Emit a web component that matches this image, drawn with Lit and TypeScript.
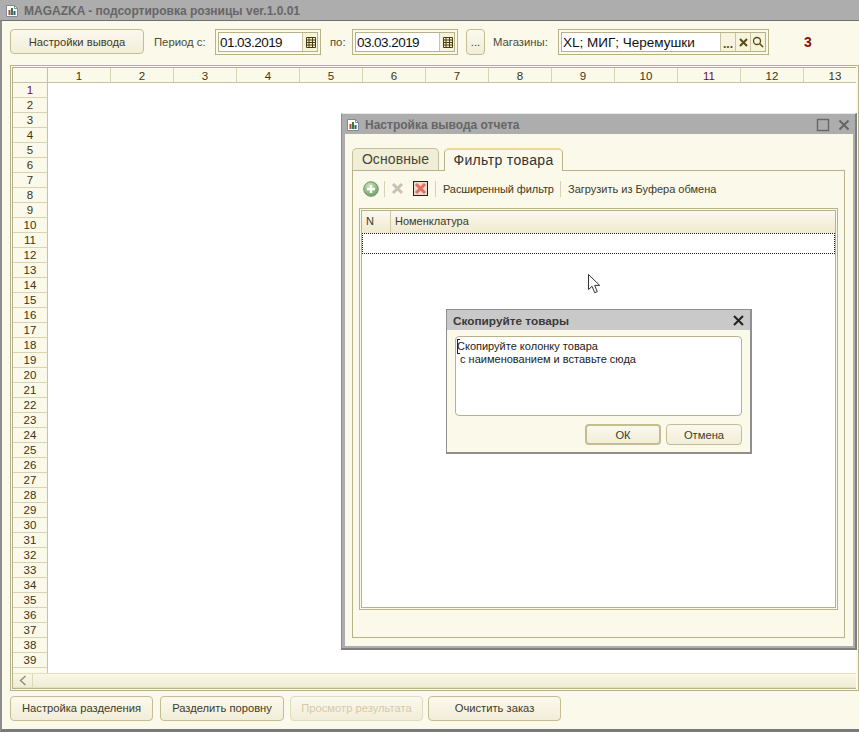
import { LitElement, html, css, svg } from "lit";
import { customElement } from "lit/decorators.js";

const appIcon = svg`<svg width="12" height="12" viewBox="0 0 12 12"><path d="M.5.5h8l3 3v8H.5z" fill="#fff" stroke="#7f8a98"/><path d="M8.5.5v3h3" fill="none" stroke="#7f8a98"/><rect x="2.5" y="5" width="2" height="5" fill="#b8452a"/><rect x="5" y="3" width="2" height="7" fill="#2f7d3a"/><rect x="7.5" y="6" width="2" height="4" fill="#2a56a8"/></svg>`;
const calIcon = svg`<svg width="11" height="11" viewBox="0 0 11 11"><path d="M1.5.5h9v10h-9zM1.5 3h9M1.5 5.5h9M1.5 8h9M4 .5v10M7.5.5v10" fill="none" stroke="#4a3c08"/></svg>`;
const xIcon = svg`<svg width="9" height="9" viewBox="0 0 9 9"><path d="M1 1l7 7M8 1L1 8" stroke="#5a4a10" stroke-width="2"/></svg>`;
const searchIcon = svg`<svg width="12" height="12" viewBox="0 0 12 12"><circle cx="5" cy="5" r="3.5" fill="none" stroke="#5a4a10" stroke-width="1.3"/><path d="M7.8 7.8l3.2 3.2" stroke="#5a4a10" stroke-width="1.6"/></svg>`;

@customElement("app-root")
export class AppRoot extends LitElement {
  static styles = css`
    :host { display: block; width: 859px; height: 733px; position: relative; overflow: hidden; background: #fff;
      font-family: "Liberation Sans", Arial, sans-serif; font-size: 12px; color: #3a3320; }
    * { box-sizing: border-box; }
    .main { width: 859px; height: 733px; display: flex; flex-direction: column; }
    .title { height: 20px; flex: none; background: #adadad; display: flex; align-items: center; padding: 1px 0 0 6px; gap: 6px; }
    .title b { font-size: 12px; color: #666; }
    .body { height: 712px; flex: none; background: #fbf9e9; border-top: 1px solid #6f6f6f; border-left: 2px solid #8d8d8d;
      border-bottom: 3px solid #7a7a7a; display: flex; flex-direction: column; }
    .toolbar { height: 44px; flex: none; display: flex; align-items: flex-start; padding: 8px 0 0 8px; position: relative; }
    .btn { height: 25px; border: 1px solid #c4bd92; border-radius: 4px; display: flex; align-items: center; justify-content: center;
      background: linear-gradient(#fbf9ee, #f1edd8); color: #3f3a25; font-size: 11.2px; flex: none; }
    .btn.dis { color: #d8c8a8; border-color: #e0dcc0; }
    .bottom .btn { padding-bottom: 2px; }
    .lbl { color: #4d4a3a; flex: none; line-height: 26px; font-size: 11.3px; }
    .field { height: 26px; flex: none; border: 1px solid #b8b28a; padding: 2px; display: flex; }
    .field .in { border: 1px solid #b8b28a; background: #fff; flex: 1; display: flex; height: 20px; }
    .field .txt { flex: 1; background: #fff; color: #111; font-size: 13.5px; line-height: 19px; padding-left: 1px; white-space: nowrap; }
    .field .txt.date { letter-spacing: -.55px; }
    .field .sb { width: 15px; flex: none; border-left: 1px solid #c9c3a0; background: #f6f3de; display: flex; align-items: center; justify-content: center; color: #5a4a10; }
    .red { color: #8c0a0a; font-weight: 700; font-size: 14px; line-height: 26px; flex: none; }
    .sheet { width: 849px; height: 626px; flex: none; margin-left: 8px; border: 1px solid #b8b28a; padding: 1px 2px 1px 1px; }
    .sheet-in { border-top: 1px solid #b8b28a; border-left: 1px solid #b8b28a; border-bottom: 1px solid #b8b28a; height: 100%; display: flex; flex-direction: column; background: #fff; overflow: hidden; }
    .colhead { display: flex; height: 15px; flex: none; overflow: hidden; background: #fbf9e9; border-bottom: 1px solid #c9c39c; }
    .corner { width: 35px; flex: none; border-right: 1px solid #c9c39c; }
    .ch { width: 63px; flex: none; text-align: center; border-right: 1px solid #d8d3b0; font-size: 11.5px; line-height: 16px; color: #3d3510; }
    .ch.m, .rh.m { color: #6a1030; }
    .sheet-body { flex: 1; min-height: 0; overflow: hidden; }
    .rh { width: 35px; height: 15px; text-align: center; background: #fbf9e9; border-right: 1px solid #c9c39c; border-bottom: 1px solid #d8d3b0; font-size: 11.5px; line-height: 15px; color: #3d3510; }
    .hscroll { height: 15px; flex: none; background: linear-gradient(#f9f7e6, #f0edd6); border-top: 1px solid #e4e0bc; border-bottom: 1px solid #e4e0bc; display: flex; }
    .arrow { width: 20px; border-right: 1px solid #dcd8b8; display: flex; align-items: center; justify-content: center; }
    .bottom { flex: 1; display: flex; padding: 5px 0 0 8px; align-items: flex-start; }
    .win { position: absolute; left: 341px; top: 113px; width: 516px; height: 537px; background: #adadad; border-right: 2px solid #7f7f7f; border-bottom: 2px solid #7f7f7f; border-top: 1px solid #e8e8e8; border-left: 1px solid #8d8d8d; padding: 0 2px 2px 3px; display: flex; flex-direction: column; }
    .win-t { height: 20px; flex: none; display: flex; align-items: center; gap: 6px; padding: 1px 0 0 2px; }
    .win-t b { font-size: 12px; color: #666; flex: 1; }
    .win-c { flex: 1; background: #fbf9e9; padding: 14px 8px 8px 7px; display: flex; flex-direction: column; min-height: 0; }
    .tabs { display: flex; height: 23px; flex: none; gap: 5px; position: relative; z-index: 1; }
    .tab { border: 1px solid #c5bf98; border-bottom: none; border-radius: 5px 5px 0 0; background: #f0eed8; font-size: 14px; letter-spacing: .1px; display: flex; align-items: center; justify-content: center; color: #4a4630; width: 87px; height: 22px; padding-bottom: 1px; }
    .tab.on { width: 119px; height: 23px; background: #fbf9e9; border-color: #b8b28a; border-top: 2px solid #ecd98e; color: #333; letter-spacing: .35px; padding-bottom: 2px; }
    .panel { flex: 1; border: 1px solid #b8b28a; margin-top: -1px; padding: 0 6px 27px 6px; display: flex; flex-direction: column; min-height: 0; }
    .tb { height: 37px; flex: none; display: flex; align-items: center; padding: 0 0 2px 4px; font-size: 11px; color: #3f3a25; }
    .sep { width: 1px; height: 16px; background: #d6d2b4; flex: none; }
    .grid { flex: 1; border: 1px solid #b8b28a; padding: 1px; min-height: 0; }
    .grid-in { border: 1px solid #b8b28a; height: 100%; background: #fff; }
    .gh { height: 22px; display: flex; background: linear-gradient(#fbf9ee, #efe9cf); font-size: 11px; line-height: 21px; color: #3f3a25; }
    .gh .n { width: 29px; padding-left: 4px; border-right: 1px solid #cfc9a4; }
    .gh .m { padding-left: 4px; }
    .grow { height: 21px; border: 1px dotted #222; }
    .cursor { position: absolute; left: 588px; top: 274px; }
    .dlg { position: absolute; left: 446px; top: 309px; width: 306px; height: 145px; background: #fbf9e9; border: 1px solid #8f8f8f; border-bottom-width: 2px; border-right-width: 2px; display: flex; flex-direction: column; }
    .dlg-t { height: 20px; flex: none; background: #c9c9c9; display: flex; align-items: center; justify-content: space-between; padding: 1px 6px 0; }
    .dlg-t b { font-size: 11.8px; color: #3a3a3a; }
    .dlg-c { flex: 1; padding: 6px 8px 8px 8px; display: flex; flex-direction: column; gap: 8px; }
    .ta { height: 80px; flex: none; background: #fff; border: 1px solid #b8b28a; border-radius: 4px; font-size: 11px; line-height: 13px; padding: 3px 1px; color: #222; position: relative; }
    .ta div { white-space: pre; }
    .caret { position: absolute; left: 1px; top: 2px; width: 3px; height: 15px; border: 1px solid #222; border-right: none; }
    .dlg-b { display: flex; justify-content: flex-end; gap: 5px; }
    .dlg-b .btn { width: 76px; height: 21px; }
    .dlg-b .btn.def { border: 2px solid #c4bd92; }
  `;

  render() {
    const cols = Array.from({ length: 13 }, (_, i) => i + 1);
    const rows = Array.from({ length: 40 }, (_, i) => i + 1);
    return html`
      <div class="main">
        <div class="title">${appIcon}<b>MAGAZKA - подсортировка розницы ver.1.0.01</b></div>
        <div class="body">
          <div class="toolbar">
            <div class="btn" style="width:134px">Настройки вывода</div>
            <div class="lbl" style="margin-left:10px;width:61px">Период с:</div>
            <div class="field" style="width:106px"><div class="in"><div class="txt date">01.03.2019</div><div class="sb">${calIcon}</div></div></div>
            <div class="lbl" style="margin-left:9px;width:22px">по:</div>
            <div class="field" style="width:106px"><div class="in"><div class="txt date">03.03.2019</div><div class="sb">${calIcon}</div></div></div>
            <div class="btn" style="width:19px;margin-left:8px;height:26px">...</div>
            <div class="lbl" style="margin-left:8px;width:65px">Магазины:</div>
            <div class="field" style="width:211px"><div class="in"><div class="txt">XL; МИГ; Черемушки</div><div class="sb" style="font-weight:700;align-items:flex-end">...</div><div class="sb">${xIcon}</div><div class="sb">${searchIcon}</div></div></div>
            <div class="red" style="margin-left:35px">3</div>
          </div>
          <div class="sheet"><div class="sheet-in">
            <div class="colhead"><div class="corner"></div>${cols.map((c) => html`<div class="ch ${c === 11 ? "m" : ""}">${c}</div>`)}</div>
            <div class="sheet-body">${rows.map((r) => html`<div class="rh ${r === 1 ? "m" : ""}">${r < 40 ? r : ""}</div>`)}</div>
            <div class="hscroll"><div class="arrow"><svg width="8" height="11" viewBox="0 0 8 11"><path d="M6.5 1L1.5 5.5l5 4.5" fill="none" stroke="#8f8b70" stroke-width="1.4"/></svg></div></div>
          </div></div>
          <div class="bottom">
            <div class="btn" style="width:143px">Настройка разделения</div>
            <div class="btn" style="width:124px;margin-left:7px">Разделить поровну</div>
            <div class="btn dis" style="width:133px;margin-left:6px">Просмотр результата</div>
            <div class="btn" style="width:133px;margin-left:5px">Очистить заказ</div>
          </div>
        </div>
      </div>

      <div class="win">
        <div class="win-t">${appIcon}<b>Настройка вывода отчета</b>
          <svg width="40" height="14" viewBox="0 0 40 14"><rect x="4.5" y="1.5" width="11" height="11" fill="none" stroke="#666" stroke-width="1.4"/><path d="M26.5 2.5l9 9M35.5 2.5l-9 9" stroke="#666" stroke-width="2"/></svg>
        </div>
        <div class="win-c">
          <div class="tabs"><div class="tab">Основные</div><div class="tab on">Фильтр товара</div></div>
          <div class="panel">
            <div class="tb">
              <svg width="16" height="16" viewBox="0 0 16 16" style="margin-right:5px"><defs><radialGradient id="g" cx=".4" cy=".3" r=".8"><stop offset="0" stop-color="#cfe8b8"/><stop offset="1" stop-color="#5f9a55"/></radialGradient></defs><circle cx="8" cy="8" r="7.3" fill="url(#g)" stroke="#7f8f76"/><path d="M8 4v8M4 8h8" stroke="#fff" stroke-width="2.4"/></svg>
              <div class="sep"></div>
              <svg width="13" height="13" viewBox="0 0 13 13" style="margin:0 9px 0 6px"><path d="M2 2l9 9M11 2l-9 9" stroke="#c9c2b4" stroke-width="3"/></svg>
              <svg width="15" height="15" viewBox="0 0 15 15" style="margin-right:7px"><rect x=".5" y=".5" width="14" height="14" fill="#efd8d0" stroke="#222"/><path d="M3 3l9 9M12 3l-9 9" stroke="#e0705f" stroke-width="3"/></svg>
              <div class="sep"></div>
              <span style="margin:0 7px;width:110px;white-space:nowrap;letter-spacing:-.1px">Расширенный фильтр</span>
              <div class="sep"></div>
              <span style="margin-left:7px;white-space:nowrap">Загрузить из Буфера обмена</span>
            </div>
            <div class="grid"><div class="grid-in">
              <div class="gh"><div class="n">N</div><div class="m">Номенклатура</div></div>
              <div class="grow"></div>
            </div></div>
          </div>
        </div>
      </div>

      <svg class="cursor" width="13" height="20" viewBox="0 0 13 20"><path d="M.5.5v15l3.6-3.2 2.6 6.4 2.6-1.1-2.6-6.2h5z" fill="#fff" stroke="#333"/></svg>

      <div class="dlg">
        <div class="dlg-t"><b>Скопируйте товары</b><svg width="11" height="11" viewBox="0 0 11 11"><path d="M1 1l9 9M10 1l-9 9" stroke="#222" stroke-width="2"/></svg></div>
        <div class="dlg-c">
          <div class="ta"><span class="caret"></span><div>Скопируйте колонку товара</div><div> с наименованием и вставьте сюда</div></div>
          <div class="dlg-b"><div class="btn def">ОК</div><div class="btn">Отмена</div></div>
        </div>
      </div>
    `;
  }
}
